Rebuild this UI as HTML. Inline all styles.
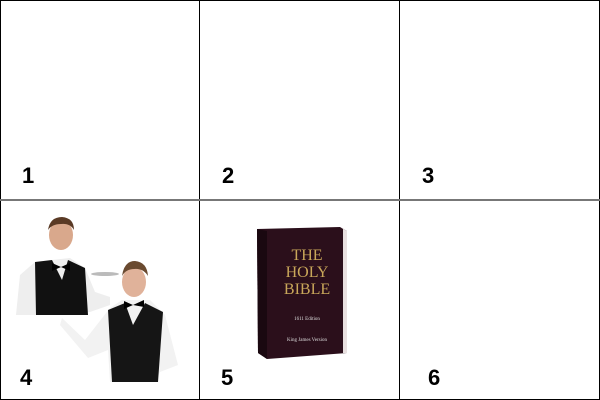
<!DOCTYPE html>
<html><head><style>
body{margin:0;width:600px;height:400px;background:#fff;position:relative;overflow:hidden;font-family:"Liberation Sans",Arial,sans-serif}
.l{position:absolute;background:#000}
.n{position:absolute;font-weight:bold;font-size:22px;line-height:22px}
</style></head><body>
<div class="l" style="left:0;top:0;width:600px;height:1px"></div>
<div class="l" style="left:0;top:399px;width:600px;height:1px"></div>
<div class="l" style="left:0;top:0;width:1px;height:400px"></div>
<div class="l" style="left:599px;top:0;width:1px;height:400px"></div>
<div class="l" style="left:199px;top:0;width:1px;height:400px"></div>
<div class="l" style="left:399px;top:0;width:1px;height:400px"></div>
<div class="l" style="left:0;top:199px;width:600px;height:2px;background:#777"></div>
<div class="n" style="left:22px;top:165px">1</div>
<div class="n" style="left:222px;top:165px">2</div>
<div class="n" style="left:422px;top:165px">3</div>
<div class="n" style="left:20px;top:367px">4</div>
<div class="n" style="left:221px;top:367px">5</div>
<div class="n" style="left:428px;top:367px">6</div>
<svg style="position:absolute;left:0;top:200px" width="200" height="199">
<!-- back waiter -->
<path d="M20 75 L35 62 L52 60 L70 58 L85 68 L95 92 L110 97 L110 105 L90 112 L35 115 L16 115 Z" fill="#eee"/>
<path d="M35 62 L52 60 L62 80 L68 60 L85 68 L88 115 L36 115 Z" fill="#111"/>
<ellipse cx="61" cy="35" rx="12" ry="15" fill="#d9a88c"/>
<path d="M48 30 Q50 17 62 17 Q74 18 74 30 Q70 23 61 24 Q52 24 48 30Z" fill="#5a3a25"/>
<path d="M52 63 L61 67 L70 63 L70 71 L61 67 L52 71Z" fill="#000"/>
<ellipse cx="105" cy="74" rx="14" ry="2" fill="#bbb"/>
<!-- front waiter -->
<path d="M62 118 L85 140 L110 108 L122 100 L150 100 L165 115 L178 165 L160 172 L155 182 L110 182 L108 150 L88 158 L60 125Z" fill="#f2f2f2"/>
<path d="M108 110 L125 103 L133 125 L145 103 L163 112 L158 182 L112 182Z" fill="#151515"/>
<ellipse cx="134" cy="82" rx="12" ry="15" fill="#e0b29a"/>
<path d="M122 76 Q124 61 135 61 Q147 62 148 76 Q143 68 134 69 Q126 69 122 76Z" fill="#6a4a30"/>
<path d="M124 101 L133 105 L144 100 L144 107 L133 105 L124 109Z" fill="#000"/>
</svg>
<svg style="position:absolute;left:255px;top:225px" width="95" height="135">
<path d="M2 4 L85 2 L92 6 L92 128 L12 134 L3 128Z" fill="#2b0f1b"/>
<path d="M2 4 L12 6 L12 134 L3 128Z" fill="#1a0810"/>
<path d="M85 2 L92 6 L92 128 L88 128 L88 4Z" fill="#e8e0e0"/>
<g fill="#c9a75a" font-family="Liberation Serif,serif" text-anchor="middle">
<text x="52" y="35" font-size="16">THE</text>
<text x="52" y="52" font-size="16">HOLY</text>
<text x="52" y="69" font-size="16">BIBLE</text>
<text x="52" y="95" font-size="5" fill="#ddd">1611 Edition</text>
<text x="52" y="116" font-size="5" fill="#ddd">King James Version</text>
</g>
</svg>
</body></html>
